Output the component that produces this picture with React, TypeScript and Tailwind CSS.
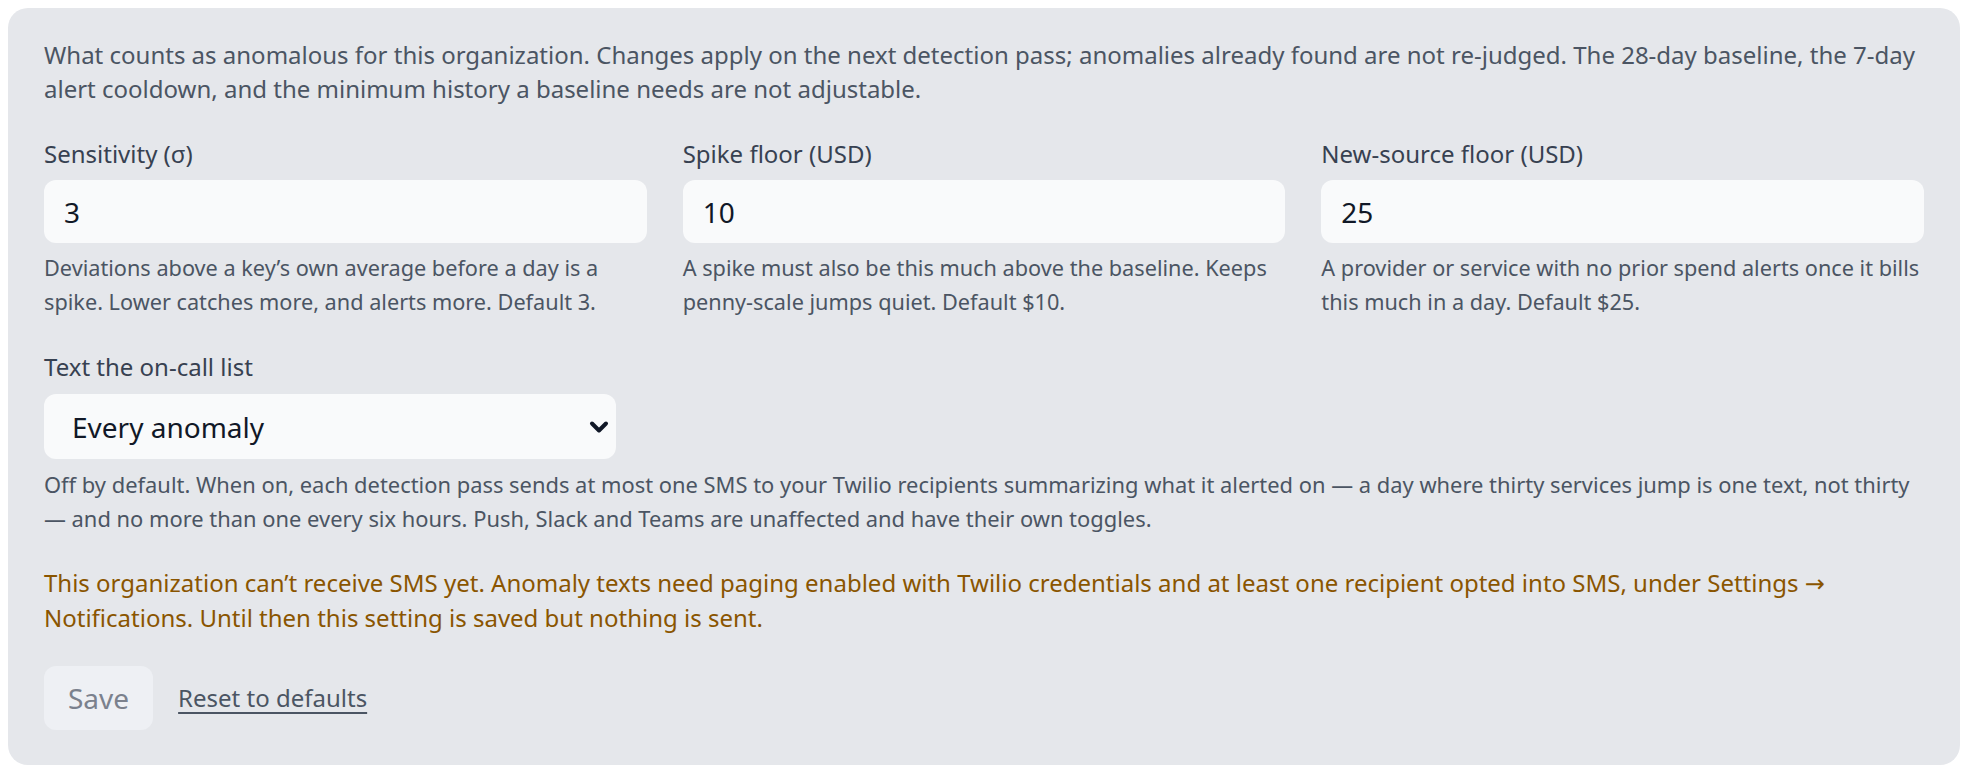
import { useState } from 'react';

// Anomaly detection settings panel

const fields: Array<{ id: string; label: string; value: string; help: string }> = [
  {
    id: 'sensitivity',
    label: 'Sensitivity (σ)',
    value: '3',
    help: 'Deviations above a key’s own average before a day is a spike. Lower catches more, and alerts more. Default 3.',
  },
  {
    id: 'spike-floor',
    label: 'Spike floor (USD)',
    value: '10',
    help: 'A spike must also be this much above the baseline. Keeps penny-scale jumps quiet. Default $10.',
  },
  {
    id: 'new-source-floor',
    label: 'New-source floor (USD)',
    value: '25',
    help: 'A provider or service with no prior spend alerts once it bills this much in a day. Default $25.',
  },
];

function NumberField({ id, label, value, help }: { id: string; label: string; value: string; help: string }) {
  const [v, setV] = useState(value);
  return (
    <div className="flex flex-col">
      <label htmlFor={id} className="text-[24px] leading-[34px] text-[#374151]">
        {label}
      </label>
      <input
        id={id}
        type="text"
        inputMode="decimal"
        value={v}
        onChange={(e) => setV(e.target.value)}
        className="mt-[9px] h-[63px] w-full rounded-[12px] bg-[#f9fafb] px-[20px] text-[28px] text-[#111827] outline-none"
      />
      <p className="mt-[8px] text-[21.7px] leading-[34px] text-[#4b5563]">{help}</p>
    </div>
  );
}

export default function App() {
  const [mode, setMode] = useState('every');

  return (
    <div className="min-h-screen bg-white p-[8px] font-['Noto_Sans',sans-serif]">
      <div className="rounded-[20px] bg-[#e5e7eb] px-[36px] pt-[30px] pb-[35px]">
        <p className="text-[24px] leading-[34px] text-[#4b5563]">
          What counts as anomalous for this organization. Changes apply on the next detection pass; anomalies
          already found are not re-judged. The 28-day baseline, the 7-day alert cooldown, and the minimum history a
          baseline needs are not adjustable.
        </p>

        <div className="mt-[31px] grid grid-cols-3 gap-x-[36px]">
          {fields.map((f) => (
            <NumberField key={f.id} {...f} />
          ))}
        </div>

        <div className="mt-[31px] flex flex-col">
          <label htmlFor="sms-mode" className="text-[24px] leading-[34px] text-[#374151]">
            Text the on-call list
          </label>
          <div className="relative mt-[10px] w-[572px]">
            <select
              id="sms-mode"
              value={mode}
              onChange={(e) => setMode(e.target.value)}
              className="h-[65px] w-full appearance-none rounded-[12px] bg-[#f9fafb] pl-[28px] pr-[48px] text-[28px] text-[#111827] outline-none"
            >
              <option value="off">Off</option>
              <option value="every">Every anomaly</option>
            </select>
            <svg
              className="pointer-events-none absolute right-[7px] top-1/2 h-[14px] w-[20px] -translate-y-1/2"
              viewBox="0 0 20 14"
              fill="none"
              stroke="#111827"
              strokeWidth="4"
              strokeLinecap="round"
              strokeLinejoin="round"
            >
              <path d="M3 3.5 L10 10.5 L17 3.5" />
            </svg>
          </div>
          <p className="mt-[9px] text-[21.9px] leading-[34px] text-[#4b5563]">
            Off by default. When on, each detection pass sends at most one SMS to your Twilio recipients summarizing
            what it alerted on — a day where thirty services jump is one text, not thirty — and no more than one
            every six hours. Push, Slack and Teams are unaffected and have their own toggles.
          </p>
        </div>

        <p className="mt-[30px] text-[24px] leading-[33px] text-[#8a5500]">
          This organization can’t receive SMS yet. Anomaly texts need paging enabled with Twilio credentials and at
          least one recipient opted into SMS, under Settings{' '}
          <span className="font-['DejaVu_Sans',sans-serif]">→</span> Notifications. Until then this setting is saved
          but nothing is sent.
        </p>

        <div className="mt-[32px] flex items-center gap-[25px]">
          <button
            type="button"
            disabled
            className="h-[64px] rounded-[12px] bg-[#eef0f4] px-[24px] text-[28px] text-[#7b818d]"
          >
            Save
          </button>
          <button type="button" className="text-[24px] text-[#4b5563] underline underline-offset-[5px]">
            Reset to defaults
          </button>
        </div>
      </div>
    </div>
  );
}
